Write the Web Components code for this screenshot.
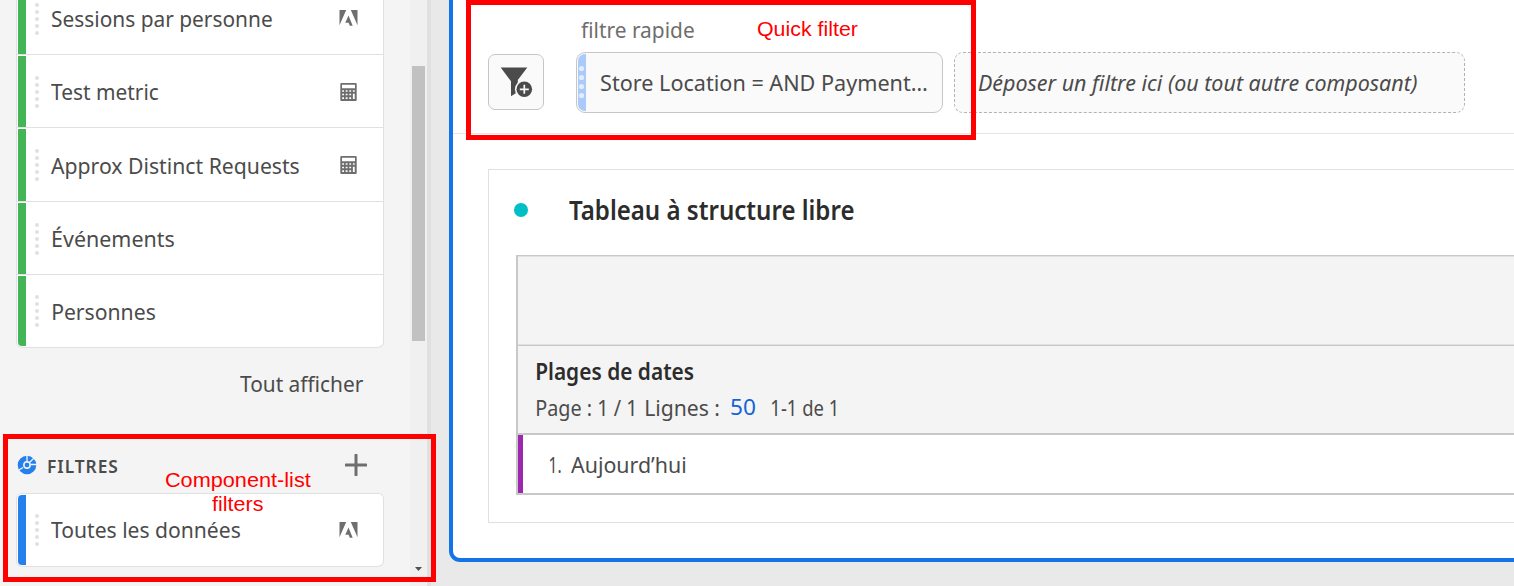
<!DOCTYPE html>
<html lang="fr"><head><meta charset="utf-8"><title>Espace de travail</title>
<style>html,body{margin:0;height:586px;overflow:hidden;background:#e9e9e9}body{font-family:"Noto Sans","Open Sans",sans-serif;color:#4b4b4b}</style>
</head><body><work-space></work-space>
<script>
const define=(name,html,init)=>customElements.define(name,class extends HTMLElement{
  connectedCallback(){
    if(this.shadowRoot)return;
    const t=document.createElement('template');t.innerHTML=html;
    this.attachShadow({mode:'open'}).append(t.content.cloneNode(true));
    if(init)init.call(this,this.shadowRoot);
  }
});

/* A label whose drawn glyphs are condensed to fill exactly `w` pixels. */
const ctx=document.createElement('canvas').getContext('2d');
define('fit-text',`<style>:host{display:block;flex:none;height:30px;line-height:30px;font-size:22.6px;white-space:pre}
span{display:inline-block;transform-origin:0 50%}</style><span><slot></slot></span>`,function(root){
  const w=+this.getAttribute('w'),cs=getComputedStyle(this);
  ctx.font=`${cs.fontStyle} ${cs.fontWeight} ${cs.fontSize} ${cs.fontFamily}`;
  ctx.letterSpacing=cs.letterSpacing==='normal'?'0px':cs.letterSpacing;
  const m=ctx.measureText(this.textContent),l=m.actualBoundingBoxLeft,k=w/(l+m.actualBoundingBoxRight);
  this.style.width=w+'px';
  root.querySelector('span').style.transform=`translateX(${l*k}px) scaleX(${k})`;
});

define('adobe-icon',`<style>:host{display:block;width:19px;height:17px}svg{display:block}</style>
<svg width="19" height="17" viewBox="0 0 19 17" fill="#6e6e6e"><path d="M.5 0H7.200L.5 15.200zM11.800 0h6.700v15.200zM9.500 5.500l4.200 10.300h-2.900l-1.200-3.100H6.300z"/></svg>`);
define('calc-icon',`<style>:host{display:block;width:19px;height:18px}svg{display:block}</style>
<svg width="19" height="18" viewBox="0 0 19 18"><rect x="1.300" y="0" width="16.400" height="18" rx="1" fill="#6e6e6e"/><path fill="#fff" d="M3 1.700h13v3.600H3zM3.200 7.200h1.800v1.600H3.200zM6.700 7.200h1.800v1.600H6.700zM10.300 7.200h1.800v1.600h-1.800zM13.900 7.200h1.800v1.600h-1.800zM3.200 10.700h1.800v1.600H3.200zM6.700 10.700h1.800v1.600H6.700zM10.300 10.700h1.800v1.600h-1.800zM3.200 14.300h1.800v1.600H3.200zM6.700 14.300h1.800v1.600H6.700zM10.300 14.300h1.800v1.600h-1.800zM13.900 10.700h1.800v5.200h-1.800z"/></svg>`);

define('component-row',`<style>
:host{display:flex;box-sizing:border-box;height:73px;background:#fff;border-bottom:1px solid #e0e0e0;align-items:center;padding:1px 25px 0 1px}
i{width:8px;align-self:stretch;background:var(--c,#44b556);border-radius:var(--r,0)}
svg{margin:0 12px 0 9px;flex:none}
.icon{margin-left:auto}
</style><i></i><svg width="4" height="32" fill="#e1e1e1"><circle cx="2" cy="2" r="2"/><circle cx="2" cy="9" r="2"/><circle cx="2" cy="16" r="2"/><circle cx="2" cy="23" r="2"/><circle cx="2" cy="30" r="2"/></svg><slot></slot><div class="icon"><slot name="icon"></slot></div>`);

define('side-bar',`<style>
:host{display:flex;width:431px;height:586px;background:#f4f4f4}
.body{width:410px;box-sizing:border-box;padding-left:16px;height:586px;overflow:hidden}
.list{width:368px;box-sizing:border-box;border:1px solid #e0e0e0;border-bottom-width:0;border-radius:6px;overflow:hidden}
.metrics{margin-top:-19px}
.all{display:flex;justify-content:flex-end;width:368px;box-sizing:border-box;padding:21px 21px 0 0}
.head{display:flex;align-items:center;height:30px;padding-top:52px;width:368px}
.head fit-text{font-size:18px;font-weight:600;letter-spacing:1px;margin-left:12px;height:30px}
.plus{margin:0 17px 2px auto;display:block}
.filters{margin-top:12px}
.track{width:17px;background:#f0f0f0;display:flex;flex-direction:column;align-items:center}
.thumb{width:13px;height:275px;margin-top:66px;background:#c1c1c1}
.arrow{margin-top:auto;margin-bottom:15px;display:block}
.split{width:4px;background:#e0e0e0}
</style>
<div class="body">
<div class="list metrics">
<component-row><fit-text w="220" style="margin-left:1px">Sessions par personne</fit-text><adobe-icon slot="icon"></adobe-icon></component-row>
<component-row><fit-text w="108">Test metric</fit-text><calc-icon slot="icon"></calc-icon></component-row>
<component-row style="height:74px"><fit-text w="248" style="padding-top:1px">Approx Distinct Requests</fit-text><calc-icon slot="icon"></calc-icon></component-row>
<component-row><fit-text w="121" style="margin-left:1.500px">Événements</fit-text></component-row>
<component-row style="--r:0 0 0 4px;border-radius:0 0 6px 6px;padding-bottom:1px"><fit-text w="102" style="margin-left:1.500px;padding-top:2px">Personnes</fit-text></component-row>
</div>
<div class="all"><fit-text w="123">Tout afficher</fit-text></div>
<div class="head"><svg width="20" height="20" viewBox="0 0 20 20" style="margin:0 0 2px .5px"><circle cx="10" cy="10" r="6.600" fill="none" stroke="#2680eb" stroke-width="5.400"/><circle cx="10" cy="10" r="2.900" fill="#2680eb" stroke="#f4f4f4" stroke-width="1"/><path d="M10 6V0M12.500 7.500l5.500-5.500M14 9.500h6M6 12.500L2 15" stroke="#f4f4f4" stroke-width="1.300"/></svg><fit-text w="70" style="margin-left:11.500px">FILTRES</fit-text>
<svg class="plus" width="22" height="22"><path d="M11 1v20M1 11h20" stroke="#6e6e6e" stroke-width="3" stroke-linecap="round"/></svg></div>
<div class="list filters"><component-row style="--c:#2680eb;--r:4px 0 0 4px;border-radius:0 0 6px 6px;padding-bottom:1px"><fit-text w="189">Toutes les données</fit-text><adobe-icon slot="icon"></adobe-icon></component-row></div>
</div>
<div class="track"><div class="thumb"></div><svg class="arrow" width="7" height="4"><path d="M0 0h7L3.500 4z" fill="#505050"/></svg></div><div class="split"></div>`);

define('filter-bar',`<style>
:host{display:flex;box-sizing:border-box;height:134px;border-bottom:1px solid #e6e6e6;padding-left:35px;align-items:flex-start}
.btn{box-sizing:border-box;width:56px;height:56px;margin-top:54px;border:1px solid #c6c6c6;border-radius:7px;background:#fafafa;display:flex}
.btn svg{margin:11px 0 0 11px}
.col{margin-left:32px;width:367px}
.lab{height:52px;padding:15px 0 0 5px;box-sizing:border-box;color:#6e6e6e}
.chip{box-sizing:border-box;height:61px;border:1px solid #c6c6c6;border-radius:9px;background:#fafafa;padding:1px;display:flex;align-items:center}
.grip{width:8px;height:57px;background:#a9cafa;border-radius:7px 0 0 7px;margin-right:15px}
.drop{box-sizing:border-box;width:511px;height:61px;margin:52px 0 0 11px;border:1px dashed #b3b3b3;border-radius:9px;background:#fafafa;display:flex;align-items:center;padding-left:23px;font-style:italic}
</style>
<div class="btn"><svg width="33" height="32" viewBox="0 0 33 32"><path d="M.7 1.500h26.600L17.800 14v12l-6.800 4.300v-15z" fill="#4b4b4b"/><circle cx="24.300" cy="23.300" r="9.400" fill="#fafafa"/><circle cx="24.300" cy="23.300" r="7.800" fill="#4b4b4b"/><path d="M24.300 18.800v9M19.800 23.300h9" stroke="#fafafa" stroke-width="1.700"/></svg></div>
<div class="col"><div class="lab"><fit-text w="113">filtre rapide</fit-text></div>
<div class="chip"><svg class="grip" width="8" height="57" fill="#e2edfd"><circle cx="3.500" cy="14.500" r="2.600"/><circle cx="3.500" cy="23.500" r="2.600"/><circle cx="3.500" cy="32.500" r="2.600"/><circle cx="3.500" cy="41.500" r="2.600"/></svg><fit-text w="326">Store Location = AND Payment…</fit-text></div></div>
<div class="drop"><fit-text w="439">Déposer un filtre ici (ou tout autre composant)</fit-text></div>`);

define('free-table',`<style>
:host{display:block;box-sizing:border-box;margin:35px 0 0 35px;height:354px;border:1px solid #e0e0e0;border-right:0;padding-left:27px}
.title{display:flex;align-items:center;height:85px;box-sizing:border-box;padding-bottom:6px;margin-left:-2.500px}
.dot{width:14px;height:14px;border-radius:50%;background:#00c0c7;margin:0 41.500px 0 0}
.title fit-text{font-size:26.500px;font-weight:600;color:#2c2c2c}
.tbl{border:2px solid #c8c8c8;border-top-width:1px;border-right:0;background:#f4f4f4}
.empty{height:87px;border-top:1px solid #e1e1e1;border-bottom:1px solid #e1e1e1}
.head{height:87px;border-top:1px solid #c8c8c8;border-bottom:2px solid #c8c8c8;box-sizing:content-box;padding-left:19px}
.head>fit-text{font-weight:600;color:#2c2c2c;padding-top:11px}
.pg{display:flex;padding-top:6px}
.row{height:58px;border-left:5px solid #9c28b0;background:#fff;display:flex;align-items:center;padding-left:27px}
.row fit-text{padding-top:2px}
</style>
<div class="title"><div class="dot"></div><fit-text w="285">Tableau à structure libre</fit-text></div>
<div class="tbl"><div class="empty"></div><div class="head"><fit-text w="157">Plages de dates</fit-text>
<div class="pg"><fit-text w="97">Page : 1 / 1</fit-text><fit-text w="73" style="margin-left:12px">Lignes :</fit-text><fit-text w="24" style="margin:-1px 0 0 12px;color:#1463d8">50</fit-text><fit-text w="64" style="margin-left:17px">1-1 de 1</fit-text></div></div>
<div class="row"><fit-text w="11">1.</fit-text><fit-text w="115" style="margin-left:10px">Aujourd’hui</fit-text></div></div>`);

define('call-out',`<style>:host{position:absolute;box-sizing:border-box;border:5px solid #f00;display:flex;flex-direction:column;align-items:center;color:#f00;font-family:"Liberation Sans",Arial,sans-serif}
</style><slot></slot>`);

define('work-space',`<style>
:host{display:flex;position:relative;width:1514px;height:586px;overflow:hidden}
main{flex:1;margin-left:18px;margin-top:-20px;padding-top:20px;box-sizing:content-box;height:558px;border:3.500px solid #1473e6;border-width:0 0 4px 4px;border-radius:0 0 0 11px;background:#fff;overflow:hidden}
call-out fit-text{font-size:20.800px;line-height:24px;height:24px}
</style><side-bar></side-bar><main><filter-bar></filter-bar><free-table></free-table></main>
<call-out style="left:3px;top:434px;width:433px;height:148px;padding:29px 0 0 38px"><fit-text w="145">Component-list</fit-text><fit-text w="51" style="margin-right:2px">filters</fit-text></call-out>
<call-out style="left:466px;top:0;width:510px;height:140px;padding:12px 0 0 172px"><fit-text w="101">Quick filter</fit-text></call-out>`);
</script></body></html>
